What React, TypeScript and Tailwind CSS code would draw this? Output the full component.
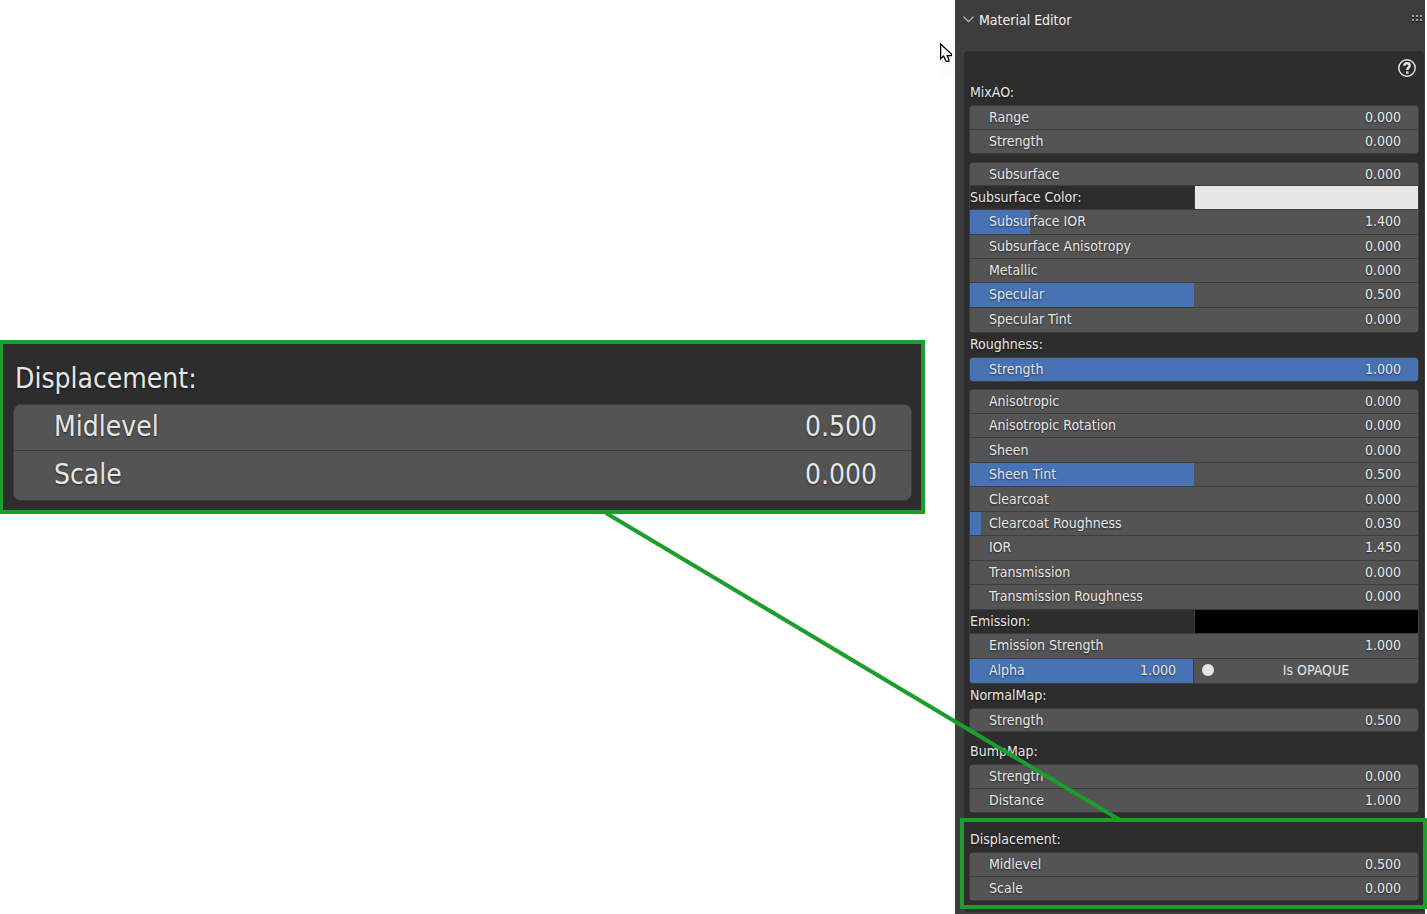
import React, { useId, useState } from "react";

type Size = "sm" | "lg";

const textShadow = "[text-shadow:0_1px_2px_rgba(0,0,0,0.55)]";

function Field({
  label,
  value,
  fill = 0,
  size = "sm",
}: {
  label: string;
  value: string;
  fill?: number;
  size?: Size;
}) {
  const id = useId();
  const [text, setText] = useState(value);
  const large = size === "lg";
  return (
    <div
      className={
        "flex min-h-0 min-w-0 items-center justify-between bg-[#545454] bg-no-repeat " +
        (large ? "pb-px pl-[40px] pr-[34px]" : "pb-px pl-[19px] pr-[17px]")
      }
      style={
        fill > 0
          ? { backgroundImage: "linear-gradient(#4772b3,#4772b3)", backgroundSize: `${fill}% 100%` }
          : undefined
      }
    >
      <label htmlFor={id} className="whitespace-nowrap">
        {label}
      </label>
      <input
        id={id}
        value={text}
        onChange={(e) => setText(e.target.value)}
        className={
          "bg-transparent p-0 text-right outline-none " + textShadow + (large ? " w-32" : " w-16")
        }
      />
    </div>
  );
}

function ColorField({ label, color }: { label: string; color: string }) {
  const id = useId();
  return (
    <div className="-ml-px flex min-h-0 bg-[#2d2d2d]">
      <label htmlFor={id} className="flex flex-1 items-center border-r border-[#3d3d3d] pb-px pl-px">
        {label}
      </label>
      <button id={id} type="button" className="w-[223px]" style={{ backgroundColor: color }} />
    </div>
  );
}

function Group({ className, children }: { className: string; children: React.ReactNode }) {
  return (
    <div
      className={
        "grid auto-rows-fr divide-y divide-[#3d3d3d] overflow-hidden border border-[#3d3d3d] bg-[#545454] " +
        className
      }
    >
      {children}
    </div>
  );
}

function Heading({ children }: { children: React.ReactNode }) {
  return <h3 className="h-6 pl-px leading-[22px]">{children}</h3>;
}

function Callout() {
  return (
    <section className="border-4 border-l-3 border-[#1b9e2b] bg-[#2d2d2d] pr-[9px] pb-[9px] pl-[10px] text-[28px] leading-8">
      <h3 className="flex h-[60px] items-center pt-[10px] pl-[2px]">Displacement:</h3>
      <Group className="h-[97px] grid-rows-[46px] rounded-[8px]">
        <Field size="lg" label="Midlevel" value="0.500" />
        <Field size="lg" label="Scale" value="0.000" />
      </Group>
    </section>
  );
}

function GripDots() {
  return (
    <svg width="11" height="8" viewBox="0 0 11 8" shapeRendering="crispEdges" aria-hidden="true">
      {[0, 4, 8].map((x) =>
        [0, 4].map((y) => (
          <g key={`${x}-${y}`}>
            <rect x={x} y={y} width="2" height="2" fill="#a0a0a0" />
            <rect x={x} y={y + 2} width="2" height="1" fill="#161616" />
          </g>
        )),
      )}
    </svg>
  );
}

function HelpIcon() {
  return (
    <svg width="18" height="18" viewBox="0 0 18 18" fill="none" aria-hidden="true">
      <circle cx="9" cy="9" r="8.2" stroke="#e8e8e8" strokeWidth="1.4" />
      <path
        d="M6.300 6.800C6.300 5 7.400 4.200 9.100 4.200s2.600.8 2.600 2.200c0 1.900-2.400 2-2.400 4.500"
        stroke="#e8e8e8"
        strokeWidth="2.400"
      />
      <rect x="8" y="12.400" width="2.500" height="2.300" fill="#e8e8e8" />
    </svg>
  );
}

function MaterialEditor() {
  return (
    <aside className="mr-[2px] flex min-h-screen w-[470px] shrink-0 flex-col bg-[#3d3d3d] pr-px pb-[2px] pl-2 text-[14px] leading-4">
      <header className="flex h-[51px] items-start justify-between pt-3 pr-px">
        <button type="button" className="flex items-center gap-[5px] text-[#f2f2f2]">
          <svg width="11" height="7" viewBox="0 0 11 7" className="-mt-[2px]" fill="none" aria-hidden="true">
            <path d="M.5.7l5 5 5-5" stroke="#c4c4c4" strokeWidth="1.2" />
          </svg>
          <span>Material Editor</span>
        </button>
        <button type="button" aria-label="Drag panel" className="pt-[3px]">
          <GripDots />
        </button>
      </header>

      <div className="ml-px flex-1 rounded-[4px] bg-[#2d2d2d] px-[5px]">
        <div className="flex h-[30px] items-start justify-end pt-2 pr-[3px]">
          <button type="button" aria-label="Help">
            <HelpIcon />
          </button>
        </div>

        <Heading>MixAO:</Heading>
        <Group className="h-[49px] rounded-[4px]">
          <Field label="Range" value="0.000" />
          <Field label="Strength" value="0.000" />
        </Group>

        <Group className="mt-2 h-[171px] grid-rows-[23px] rounded-[4px]">
          <Field label="Subsurface" value="0.000" />
          <ColorField label="Subsurface Color:" color="#e7e7e7" />
          <Field label="Subsurface IOR" value="1.400" fill={13.4} />
          <Field label="Subsurface Anisotropy" value="0.000" />
          <Field label="Metallic" value="0.000" />
          <Field label="Specular" value="0.500" fill={50} />
          <Field label="Specular Tint" value="0.000" />
        </Group>

        <Heading>Roughness:</Heading>
        <Group className="h-[25px] rounded-[4px]">
          <Field label="Strength" value="1.000" fill={100} />
        </Group>

        <Group className="mt-[7px] h-[295px] grid-rows-[24px] rounded-[4px]">
          <Field label="Anisotropic" value="0.000" />
          <Field label="Anisotropic Rotation" value="0.000" />
          <Field label="Sheen" value="0.000" />
          <Field label="Sheen Tint" value="0.500" fill={50} />
          <Field label="Clearcoat" value="0.000" />
          <Field label="Clearcoat Roughness" value="0.030" fill={2.5} />
          <Field label="IOR" value="1.450" />
          <Field label="Transmission" value="0.000" />
          <Field label="Transmission Roughness" value="0.000" />
          <ColorField label="Emission:" color="#000000" />
          <Field label="Emission Strength" value="1.000" />
          <div className="grid min-h-0 grid-cols-2 divide-x divide-[#3d3d3d]">
            <Field label="Alpha" value="1.000" fill={100} />
            <button type="button" className="flex min-w-0 items-center bg-[#545454] pb-px pl-2">
              <span className="size-3 rounded-full bg-[#e6e6e6]" />
              <span className="flex-1 text-center">Is OPAQUE</span>
            </button>
          </div>
        </Group>

        <Heading>NormalMap:</Heading>
        <Group className="h-6 rounded-[4px]">
          <Field label="Strength" value="0.500" />
        </Group>

        <div className="h-2" />
        <Heading>BumpMap:</Heading>
        <Group className="h-[49px] rounded-[4px]">
          <Field label="Strength" value="0.000" />
          <Field label="Distance" value="1.000" />
        </Group>

        <section className="relative mt-[5px] pt-[10px] pb-2">
          <div className="pointer-events-none absolute inset-y-0 -right-2 -left-[9px] border-4 border-[#1b9e2b]" />
          <Heading>Displacement:</Heading>
          <Group className="h-[49px] rounded-[4px]">
            <Field label="Midlevel" value="0.500" />
            <Field label="Scale" value="0.000" />
          </Group>
        </section>
      </div>
    </aside>
  );
}

export default function App() {
  return (
    <div
      className={
        "relative flex min-h-screen overflow-hidden bg-white font-['DejaVu_Sans_Condensed','DejaVu_Sans',sans-serif] text-[#e6e6e6] " +
        textShadow
      }
    >
      <main className="min-w-0 flex-1 pt-[340px] pr-[30px]">
        <Callout />
      </main>
      <MaterialEditor />

      <svg
        className="pointer-events-none absolute top-[512px] right-[305px]"
        width="522"
        height="308"
        viewBox="0 0 522 308"
        aria-hidden="true"
      >
        <path d="M6 1L520 308" stroke="#1b9e2b" strokeWidth="4" />
      </svg>

      <svg
        className="pointer-events-none absolute top-[43px] right-[472px] bg-[#fcfcfc]"
        width="15"
        height="32"
        viewBox="0 0 15 32"
        aria-hidden="true"
      >
        <path
          d="M.6 1v14.800l3-2.800 2.600 5.400h2.600V16.200l-1.600-3.600h4.200V11z"
          fill="#fff"
          stroke="#000"
          strokeWidth="1.3"
        />
      </svg>
    </div>
  );
}
